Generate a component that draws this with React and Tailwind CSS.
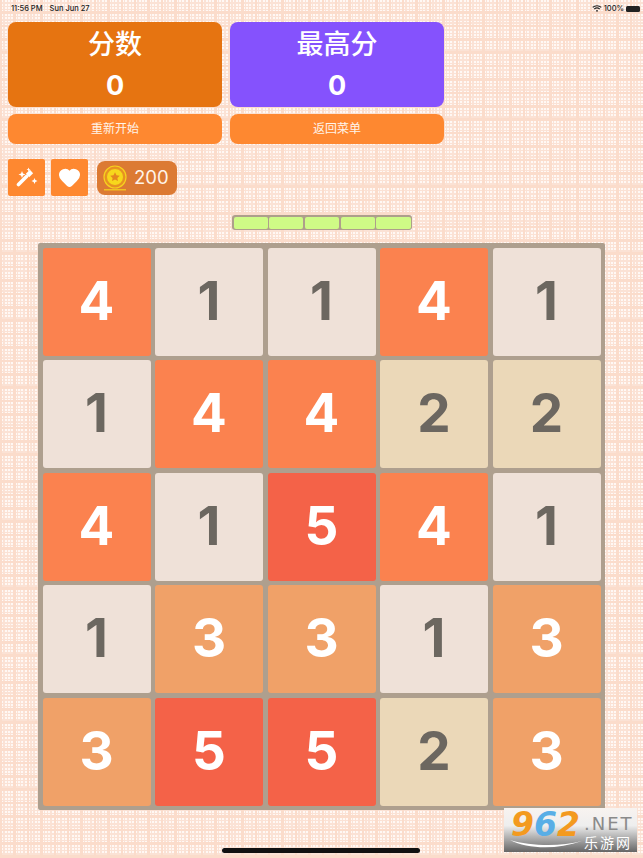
import { Heart } from 'lucide-react';

const BOARD = [
  [4, 1, 1, 4, 1],
  [1, 4, 4, 2, 2],
  [4, 1, 5, 4, 1],
  [1, 3, 3, 1, 3],
  [3, 5, 5, 2, 3],
];

const TILE_STYLE = {
  1: 'bg-[#efe1d8] text-[#6c6760]',
  2: 'bg-[#ebd8b8] text-[#6c6760]',
  3: 'bg-[#f0a168] text-white',
  4: 'bg-[#fb824f] text-white',
  5: 'bg-[#f46248] text-white',
};

function ScoreCard({ title, bg }) {
  return (
    <div className={`flex h-[85px] w-[214px] flex-col items-center rounded-lg pt-[5px] text-white ${bg}`}>
      <span className="text-[27px] font-medium leading-[36px]">{title}</span>
      <span className="mt-[7px] font-['Inter',sans-serif] text-[27px] font-bold leading-[32px]">0</span>
    </div>
  );
}

function Wand() {
  return (
    <svg width="22" height="22" viewBox="0 0 22 22" fill="white">
      <path d="M2.500 17.500L10.500 9.500" stroke="white" strokeWidth="3.600" strokeLinecap="round" />
      <path d="M11.500 8.500L15.500 4.500" stroke="white" strokeWidth="4.600" />
      <path d="M6 4l1 2.500 2.500 1-2.500 1-1 2.500-1-2.500-2.500-1 2.500-1z" />
      <path d="M12.500 .5l.6 1.400 1.400.6-1.400.6-.6 1.400-.6-1.400-1.400-.6 1.400-.6z" />
      <path d="M18.500 11l.9 2.100 2.100.9-2.100.9-.9 2.100-.9-2.100-2.100-.9 2.100-.9z" />
    </svg>
  );
}

function Coin() {
  return (
    <svg width="26" height="26" viewBox="0 0 26 26" fill="none">
      <circle cx="13" cy="12" r="11" fill="#e88f24" stroke="#f6d21e" strokeWidth="1.200" />
      <circle cx="13" cy="12" r="8.500" fill="#f7d71c" stroke="#e59420" strokeWidth="1" />
      <path d="M13 7.300l1.500 3 3.300.4-2.400 2.200.6 3.200-3-1.600-3 1.600.6-3.200-2.400-2.200 3.300-.4z" fill="#e5861f" />
      <path d="M2 24.800h22" stroke="#f6d21e" strokeWidth="1.200" />
    </svg>
  );
}

export default function App() {
  return (
    <div className="relative h-[858px] w-[643px] overflow-hidden bg-[#fff8f4] bg-[repeating-linear-gradient(0deg,#fbdccb_0,#fbdccb_2.500px,transparent_2.500px,transparent_13.4px),repeating-linear-gradient(90deg,#fbdccb_0,#fbdccb_2.500px,transparent_2.500px,transparent_13.4px),repeating-linear-gradient(0deg,#fbe2d5_0,#fbe2d5_1.400px,transparent_1.400px,transparent_3.35px),repeating-linear-gradient(90deg,#fbe2d5_0,#fbe2d5_1.400px,transparent_1.400px,transparent_3.35px)] font-['Liberation_Sans','Noto_Sans_CJK_SC',sans-serif]">
      {/* Status bar */}
      <div className="flex h-[15px] items-center justify-between pl-[11px] pr-[3px] pt-[2px] font-['Inter',sans-serif] text-[7.5px] font-medium leading-none text-[#222]">
        <div className="flex gap-[7px]">
          <span>11:56 PM</span>
          <span>Sun Jun 27</span>
        </div>
        <div className="flex items-center gap-[2px]">
          <svg width="10" height="7" viewBox="0 0 10 7" fill="none" stroke="#222" strokeWidth="1.100">
            <path d="M.7 2.400C3 .2 7 .2 9.300 2.400M2.300 4C3.800 2.800 6.200 2.800 7.700 4" />
            <circle cx="5" cy="5.800" r=".9" fill="#222" stroke="none" />
          </svg>
          <span>100%</span>
          <span className="h-[6px] w-[14px] rounded-[1.5px] bg-[#222]" />
        </div>
      </div>

      {/* Score cards */}
      <div className="ml-[8px] mt-[7px] flex gap-[8px]">
        <ScoreCard title="分数" bg="bg-[#e67411]" />
        <ScoreCard title="最高分" bg="bg-[#8552fd]" />
      </div>

      {/* Buttons */}
      <div className="ml-[8px] mt-[7px] flex gap-[8px]">
        <button className="h-[30px] w-[214px] rounded-lg bg-[#fe8830] text-[12px] text-[#fff4ea]">重新开始</button>
        <button className="h-[30px] w-[214px] rounded-lg bg-[#fe8830] text-[12px] text-[#fff4ea]">返回菜单</button>
      </div>

      {/* Tools */}
      <div className="ml-[8px] mt-[15px] flex items-center">
        <div className="flex h-[37px] w-[37px] items-center justify-center rounded-[2px] bg-[#fe8830]">
          <Wand />
        </div>
        <div className="ml-[6px] flex h-[37px] w-[37px] items-center justify-center rounded-[2px] bg-[#fe8830]">
          <Heart size={23} color="white" fill="white" />
        </div>
        <div className="ml-[9px] flex h-[34px] w-[80px] items-center gap-[6px] rounded-lg bg-[#dc7a33] pl-[5px] font-['Inter',sans-serif] text-[18.5px] text-[#fff4ea]">
          <Coin />
          <span>200</span>
        </div>
      </div>

      {/* Progress */}
      <div className="ml-[232px] mt-[19px] flex h-[15px] w-[180px] gap-[1.500px] rounded-[3px] bg-[#ae9f8b] p-[1.500px]">
        {[0, 1, 2, 3, 4].map((i) => (
          <div key={i} className="flex-1 rounded-[2px] bg-[#cffb86]" />
        ))}
      </div>

      {/* Board */}
      <div className="ml-[38px] mt-[13px] grid h-[567px] w-[567px] grid-cols-5 gap-[4.5px] rounded-[2px] bg-[#ae9f8e] p-[4.5px]">
        {BOARD.flat().map((value, i) => (
          <div key={i} className={`flex items-center justify-center rounded-[3px] font-['Inter',sans-serif] text-[53px] font-bold ${TILE_STYLE[value]}`}>
            {value}
          </div>
        ))}
      </div>

      {/* Home indicator */}
      <div className="absolute bottom-[5px] left-[222px] h-[5px] w-[198px] rounded-full bg-[#111]" />

      {/* Watermark */}
      <div className="absolute left-[504px] top-[808px] h-[44px] w-[133px] bg-[linear-gradient(#f8f3f0_0%,#eeeeee_40%,#666666_100%)]">
        <span className="absolute left-[7px] top-[-2px] font-['DejaVu_Sans',sans-serif] text-[33px] font-bold italic leading-[38px]">
          <span className="text-[#f39a1f]">9</span>
          <span className="text-[#58aee6]">6</span>
          <span className="text-[#f39a1f]">2</span>
        </span>
        <span className="absolute left-[80px] top-[6px] font-['DejaVu_Sans',sans-serif] text-[18px] leading-[20px] tracking-[2px] text-[#8a8a8a]">.NET</span>
        <span className="absolute left-[80px] top-[27px] text-[14px] leading-[16px] tracking-[2px] text-white">乐游网</span>
        <svg className="absolute left-[6px] top-[31px]" width="72" height="12" viewBox="0 0 72 12" fill="white">
          <path d="M0 1C18 10 46 11 72 2C50 8 20 7 0 1z" />
        </svg>
      </div>
    </div>
  );
}
